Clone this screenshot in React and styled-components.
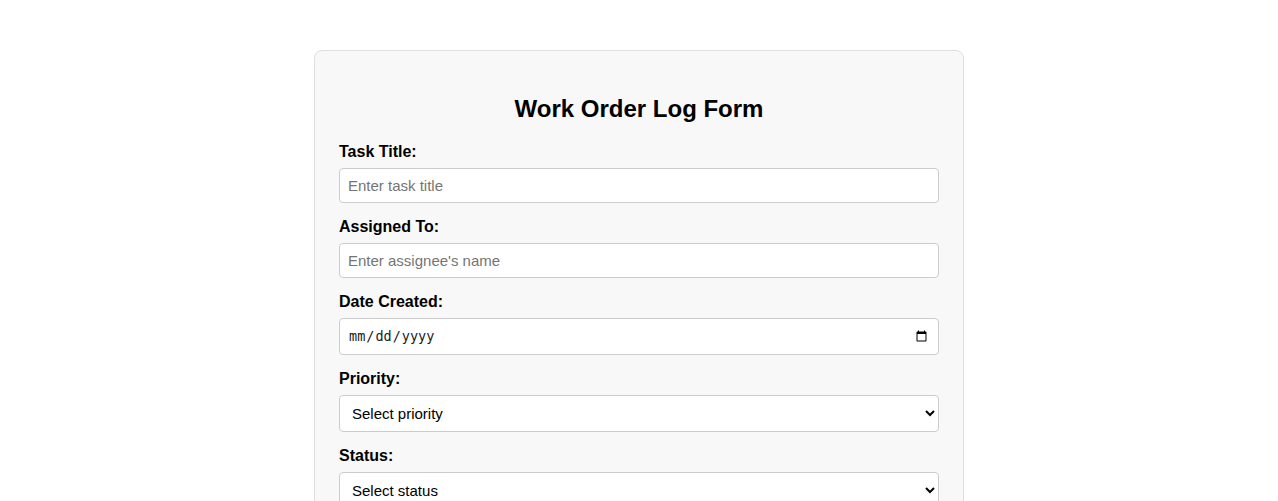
import React from "react";
import styled, { createGlobalStyle } from "styled-components";

const GlobalStyle = createGlobalStyle`
  html, body {
    margin: 0;
    padding: 0;
    background: #ffffff;
    font-family: "Liberation Sans", Arial, sans-serif;
    color: #000000;
  }
  * { box-sizing: border-box; }
`;

const Card = styled.form`
  width: 650px;
  margin: 50px auto;
  padding: 24px;
  background: #f8f8f8;
  border: 1px solid #dedede;
  border-radius: 8px;
`;

const Title = styled.h2`
  margin: 0.83em 0;
  font-size: 24px;
  font-weight: bold;
  text-align: center;
  line-height: normal;
`;

const Label = styled.label`
  display: block;
  margin-bottom: 6.5px;
  font-size: 16px;
  font-weight: bold;
  line-height: 18.4px;
`;

const fieldBase = `
  display: block;
  width: 100%;
  margin: 0 0 15px 0;
  padding: 8px;
  border: 1px solid #cccccc;
  border-radius: 4px;
  background: #ffffff;
  color: #000000;
  font-size: 15px;
  line-height: normal;
`;

const TextInput = styled.input`
  ${fieldBase}
  height: 35px;
  font-family: "Liberation Sans", Arial, sans-serif;
  &::placeholder { color: #757575; }
`;

const DateInput = styled.input`
  ${fieldBase}
  height: 37.5px;
  font-family: "DejaVu Sans Mono", monospace;
  font-size: 13.5px;
  color: #1a1a1a;
`;

const Select = styled.select`
  ${fieldBase}
  height: 37px;
  font-family: "Liberation Sans", Arial, sans-serif;
`;

const TextArea = styled.textarea`
  ${fieldBase}
  font-family: "Liberation Sans", Arial, sans-serif;
  height: 90px;
  resize: vertical;
`;

const Submit = styled.button`
  display: block;
  width: 100%;
  padding: 10px;
  border: none;
  border-radius: 4px;
  background: #4caf50;
  color: #ffffff;
  font-size: 16px;
  font-family: "Liberation Sans", Arial, sans-serif;
  cursor: pointer;
`;

export default function App() {
  return (
    <>
      <GlobalStyle />
      <Card onSubmit={(e) => e.preventDefault()}>
        <Title>Work Order Log Form</Title>

        <Label htmlFor="taskTitle">Task Title:</Label>
        <TextInput id="taskTitle" type="text" placeholder="Enter task title" />

        <Label htmlFor="assignedTo">Assigned To:</Label>
        <TextInput id="assignedTo" type="text" placeholder="Enter assignee's name" />

        <Label htmlFor="dateCreated">Date Created:</Label>
        <DateInput id="dateCreated" type="date" />

        <Label htmlFor="priority">Priority:</Label>
        <Select id="priority" defaultValue="">
          <option value="">Select priority</option>
          <option value="low">Low</option>
          <option value="medium">Medium</option>
          <option value="high">High</option>
        </Select>

        <Label htmlFor="status">Status:</Label>
        <Select id="status" defaultValue="">
          <option value="">Select status</option>
          <option value="pending">Pending</option>
          <option value="in-progress">In Progress</option>
          <option value="completed">Completed</option>
        </Select>

        <Label htmlFor="description">Description:</Label>
        <TextArea id="description" placeholder="Enter task description" />

        <Submit type="submit">Submit Work Order</Submit>
      </Card>
    </>
  );
}
